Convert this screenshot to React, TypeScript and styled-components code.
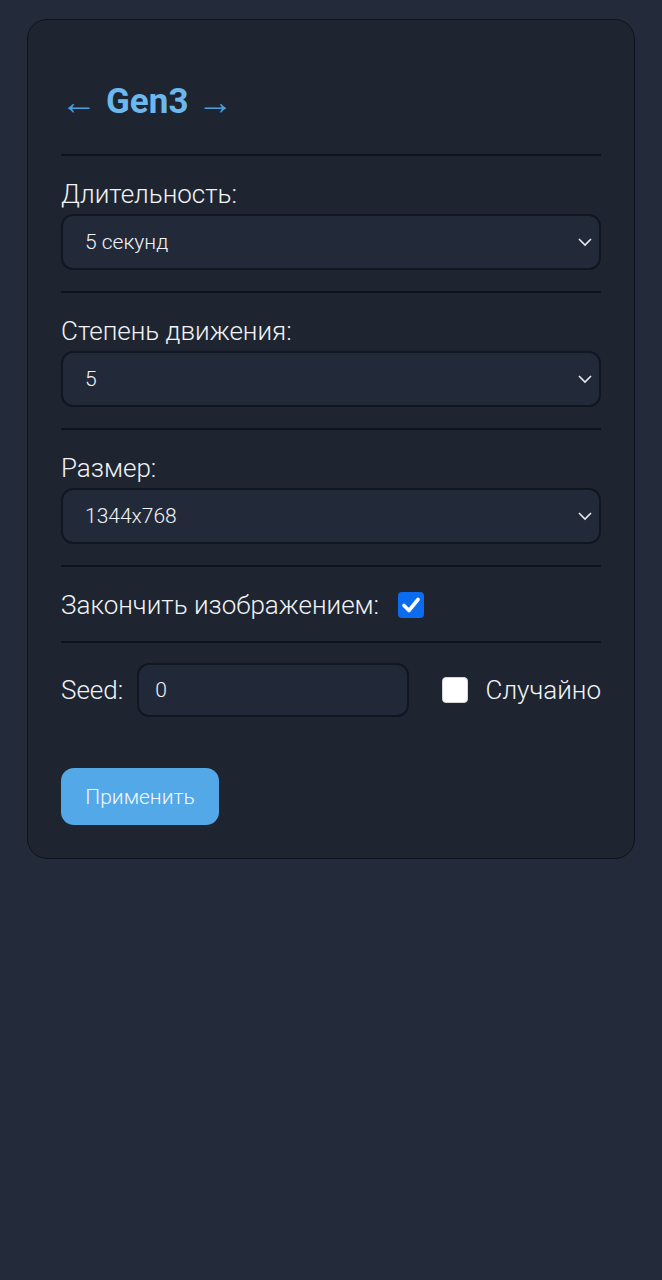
import React, { useState } from "react";
import styled, { createGlobalStyle } from "styled-components";

const GlobalStyle = createGlobalStyle`
  html, body {
    margin: 0;
    padding: 0;
    background: #232b3a;
    font-family: Roboto, "Noto Sans", sans-serif;
    color: #f1f3f6;
  }
  * { box-sizing: border-box; }
`;

const Page = styled.div`
  min-height: 1280px;
  padding: 19px 27px 0 27px;
`;

const Card = styled.div`
  width: 608px;
  background: #1e2531;
  border: 1px solid #0e131b;
  border-radius: 20px;
  padding: 60px 33px 33px 33px;
`;

const Title = styled.h1`
  margin: 0;
  display: flex;
  align-items: center;
  gap: 9px;
  font-size: 35px;
  line-height: 44px;
  font-weight: 700;
  color: #6bb8ee;
`;

const Arrow = styled.span`
  font-weight: 300;
  font-size: 36px;
  color: #4c9fd9;
`;

const Section = styled.div<{ $pad?: number }>`
  border-top: 2px solid #0f141c;
  padding: 24px 0 ${(p) => p.$pad ?? 21}px 0;
  display: flex;
  flex-direction: column;
  gap: 6px;
`;

const Header = styled.div`
  padding-bottom: 30px;
`;

const Label = styled.label`
  font-size: 26px;
  font-weight: 300;
  line-height: 28px;
  color: #f1f3f6;
  white-space: nowrap;
`;

const SelectBox = styled.div`
  position: relative;
  height: 56px;
  border: 2px solid #111720;
  border-radius: 12px;
  background: #222a39;
  display: flex;
  align-items: center;
  padding: 0 22px;
  font-size: 21px;
  font-weight: 300;
  color: #f1f3f6;
`;

const Chevron = styled.svg`
  position: absolute;
  right: 6px;
  top: 50%;
  margin-top: -6px;
`;

const InlineRow = styled.div`
  display: flex;
  align-items: center;
  gap: 19px;
`;

const CheckBox = styled.span<{ $on?: boolean }>`
  width: 26px;
  height: 26px;
  border-radius: 4px;
  background: ${(p) => (p.$on ? "#0b6cf0" : "#ffffff")};
  border: ${(p) => (p.$on ? "none" : "1px solid #d4d6da")};
  display: inline-flex;
  align-items: center;
  justify-content: center;
  flex-shrink: 0;
`;

const SeedRow = styled.div`
  display: flex;
  align-items: center;
  padding-top: 20px;
`;

const SeedInput = styled.div`
  width: 272px;
  height: 54px;
  margin-left: 14px;
  border: 2px solid #111720;
  border-radius: 12px;
  background: #212938;
  display: flex;
  align-items: center;
  padding: 0 16px;
  font-size: 21px;
  font-weight: 300;
  color: #f1f3f6;
`;

const RandomToggle = styled.div`
  margin-left: auto;
  display: flex;
  align-items: center;
  gap: 18px;
`;

const Button = styled.button`
  margin-top: 51px;
  width: 158px;
  height: 57px;
  border: none;
  border-radius: 13px;
  background: #53a8e8;
  color: #f4f8fc;
  font-family: Roboto, sans-serif;
  font-size: 21px;
  font-weight: 300;
  cursor: pointer;
`;

const Select: React.FC<{ value: string }> = ({ value }) => (
  <SelectBox>
    {value}
    <Chevron width="16" height="12" viewBox="0 0 16 12">
      <polyline
        points="2,3 8,9 14,3"
        fill="none"
        stroke="#e6e9ee"
        strokeWidth="1.6"
      />
    </Chevron>
  </SelectBox>
);

const CheckMark = () => (
  <svg width="22" height="22" viewBox="0 0 22 22">
    <polyline
      points="4,11.5 9,16.5 18,5.5"
      fill="none"
      stroke="#ffffff"
      strokeWidth="3.6"
      strokeLinecap="round"
      strokeLinejoin="round"
    />
  </svg>
);

export default function App() {
  const [finish] = useState(true);

  return (
    <Page>
      <GlobalStyle />
      <Card>
        <Header>
          <Title>
            <Arrow>←</Arrow>
            Gen3
            <Arrow>→</Arrow>
          </Title>
        </Header>
        <Section>
          <Label>Длительность:</Label>
          <Select value="5 секунд" />
        </Section>
        <Section>
          <Label>Степень движения:</Label>
          <Select value="5" />
        </Section>
        <Section>
          <Label>Размер:</Label>
          <Select value="1344x768" />
        </Section>
        <Section $pad={22}>
          <InlineRow>
            <Label>Закончить изображением:</Label>
            <CheckBox $on={finish}>{finish && <CheckMark />}</CheckBox>
          </InlineRow>
        </Section>
        <Section style={{ padding: 0 }}>
          <SeedRow>
            <Label>Seed:</Label>
            <SeedInput>0</SeedInput>
            <RandomToggle>
              <CheckBox />
              <Label>Случайно</Label>
            </RandomToggle>
          </SeedRow>
        </Section>
        <Button>Применить</Button>
      </Card>
    </Page>
  );
}
